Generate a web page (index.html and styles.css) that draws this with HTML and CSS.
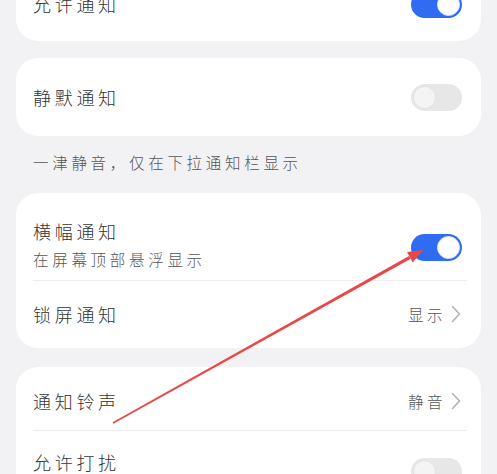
FILE: index.html
```html
<!DOCTYPE html>
<html lang="zh-CN">
<head>
<meta charset="utf-8">
<title>通知设置</title>
<link rel="stylesheet" href="styles.css">
</head>
<body>
<div class="page">
  <section class="card card-first">
    <div class="row row-single">
      <span class="title">允许通知</span>
      <span class="toggle on"><span class="knob"></span></span>
    </div>
  </section>

  <section class="card card-silent">
    <div class="row row-silent">
      <span class="title">静默通知</span>
      <span class="toggle"><span class="knob"></span></span>
    </div>
  </section>

  <p class="caption">一津静音，仅在下拉通知栏显示</p>

  <section class="card">
    <div class="row row-banner">
      <div class="text-block">
        <span class="title">横幅通知</span>
        <span class="subtitle">在屏幕顶部悬浮显示</span>
      </div>
      <span class="toggle on toggle-banner"><span class="knob"></span></span>
    </div>
    <div class="divider"></div>
    <div class="row row-lock">
      <span class="title">锁屏通知</span>
      <span class="value">显示<svg class="chevron" viewBox="0 0 10 18" width="10" height="18"><path d="M1.5 1.5 L8.5 9 L1.5 16.5" fill="none" stroke="#b3b3b3" stroke-width="1.6" stroke-linecap="round" stroke-linejoin="round"/></svg></span>
    </div>
  </section>

  <section class="card card-sound">
    <div class="row row-sound">
      <span class="title">通知铃声</span>
      <span class="value">静音<svg class="chevron" viewBox="0 0 10 18" width="10" height="18"><path d="M1.5 1.5 L8.5 9 L1.5 16.5" fill="none" stroke="#b3b3b3" stroke-width="1.6" stroke-linecap="round" stroke-linejoin="round"/></svg></span>
    </div>
    <div class="divider"></div>
    <div class="row row-disturb">
      <span class="title">允许打扰</span>
      <span class="toggle toggle-disturb"><span class="knob"></span></span>
    </div>
  </section>
</div>

<svg class="arrow" width="497" height="474" viewBox="0 0 497 474">
  <polygon points="113.4,423.7 112.6,422.3 409.0,256.0 410.8,258.8" fill="#e94848"/>
  <polygon points="423,250 407,252.1 412.8,262.5" fill="#e94848"/>
</svg>
</body>
</html>
```

FILE: styles.css
```css
html, body {
  margin: 0;
  padding: 0;
}
body {
  width: 497px;
  height: 474px;
  overflow: hidden;
  background: #f2f2f4;
  font-family: "Noto Sans CJK SC", "Noto Sans", sans-serif;
  font-weight: 300;
  color: #333333;
  position: relative;
}
.page {
  padding: 0 16px;
}
.card {
  background: #ffffff;
  border-radius: 22px;
  padding: 0 17px;
  margin-bottom: 19px;
}
.card-first {
  margin-top: -33px;
  margin-bottom: 17px;
}
.card-silent {
  margin-bottom: 0;
}
.row {
  display: flex;
  align-items: center;
  justify-content: space-between;
}
.title {
  font-size: 18px;
  line-height: 24px;
  letter-spacing: 3.7px;
  color: #333333;
}
.subtitle {
  font-size: 15.5px;
  line-height: 20px;
  letter-spacing: 3.7px;
  color: #555555;
  margin-top: 6px;
}
.text-block {
  display: flex;
  flex-direction: column;
}
.row-single {
  height: 74px;
}
.row-silent {
  height: 78px;
}
.caption {
  margin: 0;
  padding: 16px 17px 21px;
  font-size: 15.5px;
  line-height: 20px;
  letter-spacing: 3.7px;
  color: #555555;
}
.row-banner {
  padding: 26px 0 11px;
}
.toggle-banner {
  margin-top: 7px;
}
.row-lock {
  padding: 21px 0 22px;
}
.row-sound {
  padding: 22px 0 17px;
}
.row-disturb {
  padding-top: 19px;
  align-items: flex-start;
  height: 80px;
}
.toggle-disturb {
  margin-top: 8px;
}
.divider {
  height: 1px;
  background: #ededed;
  margin-right: -3px;
}
.value {
  display: flex;
  align-items: center;
  font-size: 15.5px;
  line-height: 20px;
  letter-spacing: 3.5px;
  color: #555555;
}
.chevron {
  margin-left: 5px;
  margin-right: 3px;
}
.toggle {
  position: relative;
  width: 51px;
  height: 27px;
  border-radius: 14px;
  background: #e7e7e7;
  margin-right: 2px;
  flex-shrink: 0;
}
.toggle .knob {
  position: absolute;
  top: 2px;
  left: 2px;
  width: 21px;
  height: 21px;
  border-radius: 50%;
  background: #f4f4f4;
  border: 1px solid #e2e2e2;
}
.toggle.on {
  background: #2f6cf2;
}
.toggle.on .knob {
  left: auto;
  right: 2px;
  background: #ffffff;
  border-color: #d6e2fb;
}
.arrow {
  position: absolute;
  left: 0;
  top: 0;
  pointer-events: none;
}
```
